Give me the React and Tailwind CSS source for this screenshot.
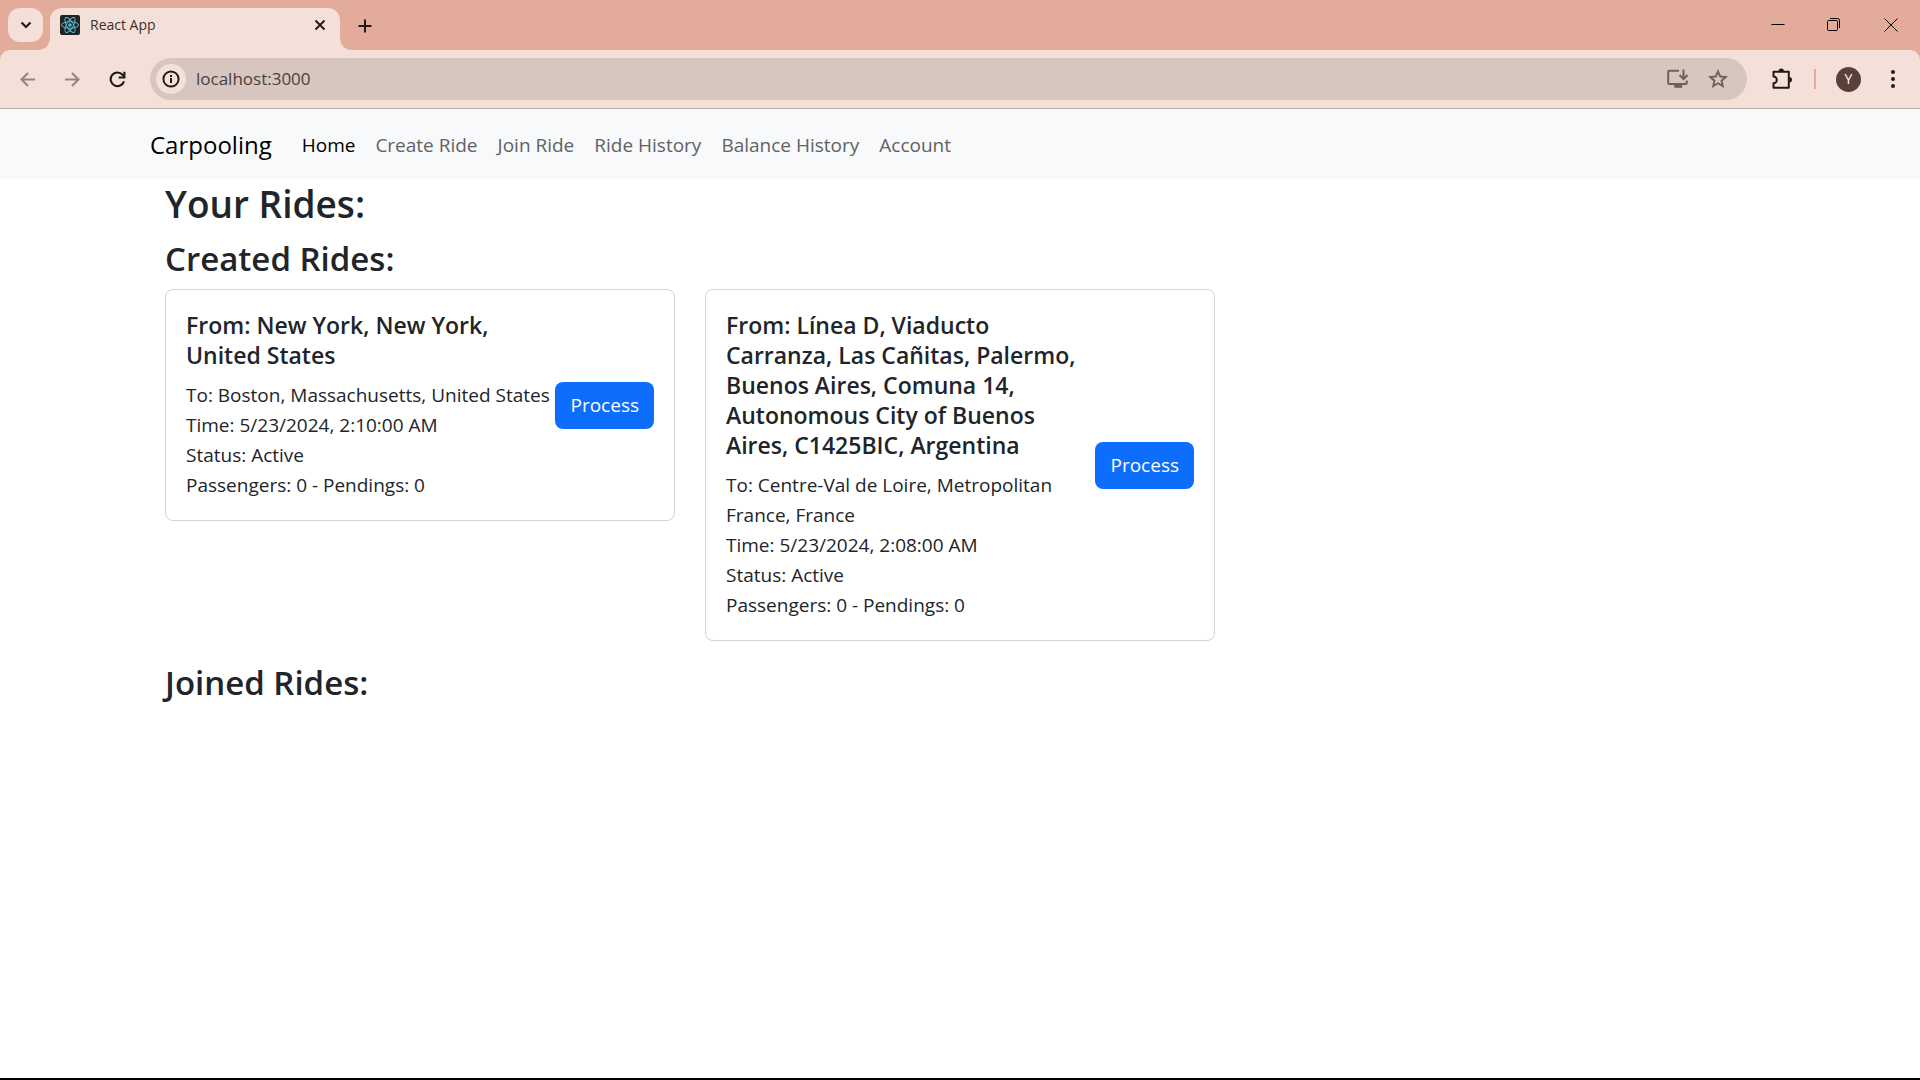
import React from "react";

const navLinks = ["Home", "Create Ride", "Join Ride", "Ride History", "Balance History", "Account"];

const rides = [
  {
    from: "New York, New York, United States",
    to: "Boston, Massachusetts, United States",
    time: "5/23/2024, 2:10:00 AM",
  },
  {
    from: "Línea D, Viaducto Carranza, Las Cañitas, Palermo, Buenos Aires, Comuna 14, Autonomous City of Buenos Aires, C1425BIC, Argentina",
    to: "Centre-Val de Loire, Metropolitan France, France",
    time: "5/23/2024, 2:08:00 AM",
  },
];

function ReactLogo() {
  return (
    <svg width="20" height="20" viewBox="0 0 20 20" fill="none" aria-hidden="true">
      <rect width="20" height="20" rx="2" fill="#222" />
      <g stroke="#57c4dc" strokeWidth="0.9">
        <ellipse cx="10" cy="10" rx="8.5" ry="3.3" />
        <ellipse cx="10" cy="10" rx="8.5" ry="3.3" transform="rotate(60 10 10)" />
        <ellipse cx="10" cy="10" rx="8.5" ry="3.3" transform="rotate(120 10 10)" />
      </g>
      <circle cx="10" cy="10" r="1.7" fill="#57c4dc" />
    </svg>
  );
}

function TabStrip() {
  return (
    <div className="flex h-[50px] items-end bg-[#e3ab9a] pl-2">
      <button aria-label="Search tabs" className="mb-2 flex h-[34px] w-[35px] items-center justify-center rounded-xl bg-[#f5e0d9]">
        <svg width="12" height="8" viewBox="0 0 12 8" fill="none" stroke="#1f1a18" strokeWidth="2.2">
          <path d="M1.5 1.5 6 6l4.5-4.5" />
        </svg>
      </button>
      <svg className="-ml-[5px] shrink-0" width="12" height="12" viewBox="0 0 12 12" fill="#f5e0d9">
        <path d="M12 0v12H0C7 12 12 7 12 0Z" />
      </svg>
      <div className="flex h-[42px] w-[290px] items-center rounded-t-xl bg-[#f5e0d9] pr-[10px] pb-2 pl-[10px]">
        <ReactLogo />
        <span className="ml-[10px] flex-1 text-sm text-[#3a302d]">React App</span>
        <button aria-label="Close tab" className="flex h-5 w-5 items-center justify-center">
          <svg width="12" height="12" viewBox="0 0 12 12" stroke="#1f1a18" strokeWidth="1.9">
            <path d="M1.5 1.5l9 9M10.500 1.5l-9 9" />
          </svg>
        </button>
      </div>
      <svg className="shrink-0" width="12" height="12" viewBox="0 0 12 12" fill="#f5e0d9">
        <path d="M0 0v12h12C5 12 0 7 0 0Z" />
      </svg>
      <button aria-label="New tab" className="mb-3 ml-px flex h-6 w-6 items-center justify-center">
        <svg width="14" height="14" viewBox="0 0 14 14" stroke="#1f1a18" strokeWidth="2">
          <path d="M7 .5v13M.5 7h13" />
        </svg>
      </button>
      <div className="ml-auto flex h-[50px]">
        <button aria-label="Minimize" className="flex w-[56px] items-center justify-center">
          <svg width="14" height="14" viewBox="0 0 14 14" stroke="#000">
            <path d="M.5 6.500h13" />
          </svg>
        </button>
        <button aria-label="Restore" className="flex w-[56px] items-center justify-center">
          <svg width="14" height="14" viewBox="0 0 14 14" fill="none" stroke="#000">
            <rect x=".5" y="2.500" width="10" height="10" rx="1" />
            <path d="M3 .5h7.500a2 2 0 0 1 2 2V10" />
          </svg>
        </button>
        <button aria-label="Close" className="flex w-[58px] items-center justify-center">
          <svg width="14" height="14" viewBox="0 0 14 14" stroke="#000">
            <path d="M.5.5l13 13M13.500.5l-13 13" />
          </svg>
        </button>
      </div>
    </div>
  );
}

function Toolbar() {
  return (
    <div className="bg-[#e3ab9a]">
      <div className="flex h-[59px] items-center rounded-t-[10px] border-b border-[#bfadaa] bg-[#f5e0d9] pl-5">
        <button aria-label="Back">
          <svg width="15" height="15" viewBox="0 0 15 15" fill="none" stroke="#94857f" strokeWidth="2">
            <path d="M15 7.500H1.500M8 1 1.500 7.500 8 14" />
          </svg>
        </button>
        <button aria-label="Forward" className="ml-[30px]">
          <svg width="15" height="15" viewBox="0 0 15 15" fill="none" stroke="#94857f" strokeWidth="2">
            <path d="M0 7.500h13.500M7 1l6.500 6.500L7 14" />
          </svg>
        </button>
        <button aria-label="Reload" className="ml-[29px]">
          <svg width="17" height="17" viewBox="0 0 17 17" fill="none" stroke="#1f1a18" strokeWidth="2.1">
            <path d="M15 10.200A6.800 6.800 0 1 1 13.500 3.700L15 5.500" />
            <path d="M15.400.8v5.700H9.700" />
          </svg>
        </button>
        <div className="ml-6 flex h-[42px] flex-1 items-center rounded-full bg-[#d7c6bf] pr-[19px] pl-[6px]">
          <button aria-label="View site information" className="flex h-[30px] w-[30px] items-center justify-center rounded-full bg-[#f5e0d9]">
            <svg width="18" height="18" viewBox="0 0 18 18" fill="none" stroke="#1f1a18" strokeWidth="2">
              <circle cx="9" cy="9" r="7.600" />
              <path d="M9 8v5M9 5v2" />
            </svg>
          </button>
          <input aria-label="Address" className="ml-[10px] min-w-0 flex-1 bg-transparent text-[17px] text-[#4a403c] outline-none" defaultValue="localhost:3000" />
          <button aria-label="Install app">
            <svg width="21" height="20" viewBox="0 0 21 20" fill="none" stroke="#6b615d" strokeWidth="2">
              <path d="M12 1.700H2.500a1.300 1.300 0 0 0-1.300 1.300v10.800a1.300 1.300 0 0 0 1.300 1.300h16a1.300 1.300 0 0 0 1.300-1.300V11.500" />
              <path d="M16.500.500v9M12.500 6l4 4 4-4" />
              <path d="M7.200 15h8v3.800h-8z" fill="#6b615d" stroke="none" />
            </svg>
          </button>
          <button aria-label="Bookmark" className="ml-5">
            <svg width="20" height="20" viewBox="0 0 20 20" fill="none" stroke="#6b615d" strokeWidth="1.900">
              <path d="M10 2.400l2.200 5.100 5.600.5-4.200 3.700 1.200 5.400L10 14.300l-4.800 2.800 1.200-5.400L2.200 8l5.600-.5Z" />
            </svg>
          </button>
        </div>
        <button aria-label="Extensions" className="ml-6">
          <svg width="22" height="22" viewBox="0 0 22 22" fill="none" stroke="#1f1a18" strokeWidth="2">
            <path d="M2.500 3.700h15.300v16H2.500v-4.500a3.300 3.300 0 0 0 0-6.600Z" strokeLinejoin="round" />
            <path d="M7.500 3.200a2.700 2.700 0 0 1 5.400 0ZM18.300 9a2.700 2.700 0 0 1 0 5.400Z" fill="#1f1a18" stroke="none" />
          </svg>
        </button>
        <div className="ml-[21px] h-5 w-[2px] bg-[#e3ab9a]" />
        <button aria-label="Profile" className="ml-5 flex h-[25px] w-[25px] items-center justify-center rounded-full bg-[#5c4038] text-sm text-white">Y</button>
        <button aria-label="Menu" className="mr-[17px] ml-[22px] flex h-5 w-5 items-center justify-center">
          <svg width="4" height="18" viewBox="0 0 4 18" fill="#1f1a18">
            <circle cx="2" cy="2" r="2" />
            <circle cx="2" cy="9" r="2" />
            <circle cx="2" cy="16" r="2" />
          </svg>
        </button>
      </div>
    </div>
  );
}

function NavBar() {
  return (
    <nav className="bg-[#f8f9fa]">
      <div className="mx-auto flex h-[70px] max-w-[1650px] items-center px-[15px] pt-[2px]">
        <a href="#" className="mr-5 text-2xl text-black">Carpooling</a>
        <ul className="flex">
          {navLinks.map((label, i) => (
            <li key={label}>
              <a href="#" className={i === 0 ? "px-[10px] text-black" : "px-[10px] text-[#616263]"}>{label}</a>
            </li>
          ))}
        </ul>
      </div>
    </nav>
  );
}

function RideCard({ ride }) {
  return (
    <article className="flex items-center justify-between gap-1 rounded-lg border border-[#d3d4d5] p-5">
      <div>
        <h3 className="mb-[10px] text-[23px] leading-[30px] font-semibold">{`From: ${ride.from}`}</h3>
        <p>{`To: ${ride.to}`}</p>
        <p>{`Time: ${ride.time}`}</p>
        <p>Status: Active</p>
        <p>Passengers: 0 - Pendings: 0</p>
      </div>
      <button className="h-[47px] shrink-0 rounded-lg bg-[#0d6efd] px-[15px] text-white">Process</button>
    </article>
  );
}

export default function App() {
  return (
    <div className="flex min-h-screen flex-col border-b-2 border-black bg-white font-['Open_Sans','Noto_Sans',sans-serif] text-[19px] leading-[30px] text-[#212529]">
      <header>
        <TabStrip />
        <Toolbar />
      </header>
      <NavBar />
      <main className="mx-auto w-full max-w-[1650px] px-[30px]">
        <h1 className="mb-2 text-[37px] leading-[50px] font-semibold">Your Rides:</h1>
        <h2 className="mb-2 text-[33px] leading-[44px] font-semibold">Created Rides:</h2>
        <div className="mb-5 grid grid-cols-3 items-start gap-[30px]">
          {rides.map((ride) => (
            <RideCard key={ride.time} ride={ride} />
          ))}
        </div>
        <h2 className="text-[33px] leading-[44px] font-semibold">Joined Rides:</h2>
      </main>
    </div>
  );
}
